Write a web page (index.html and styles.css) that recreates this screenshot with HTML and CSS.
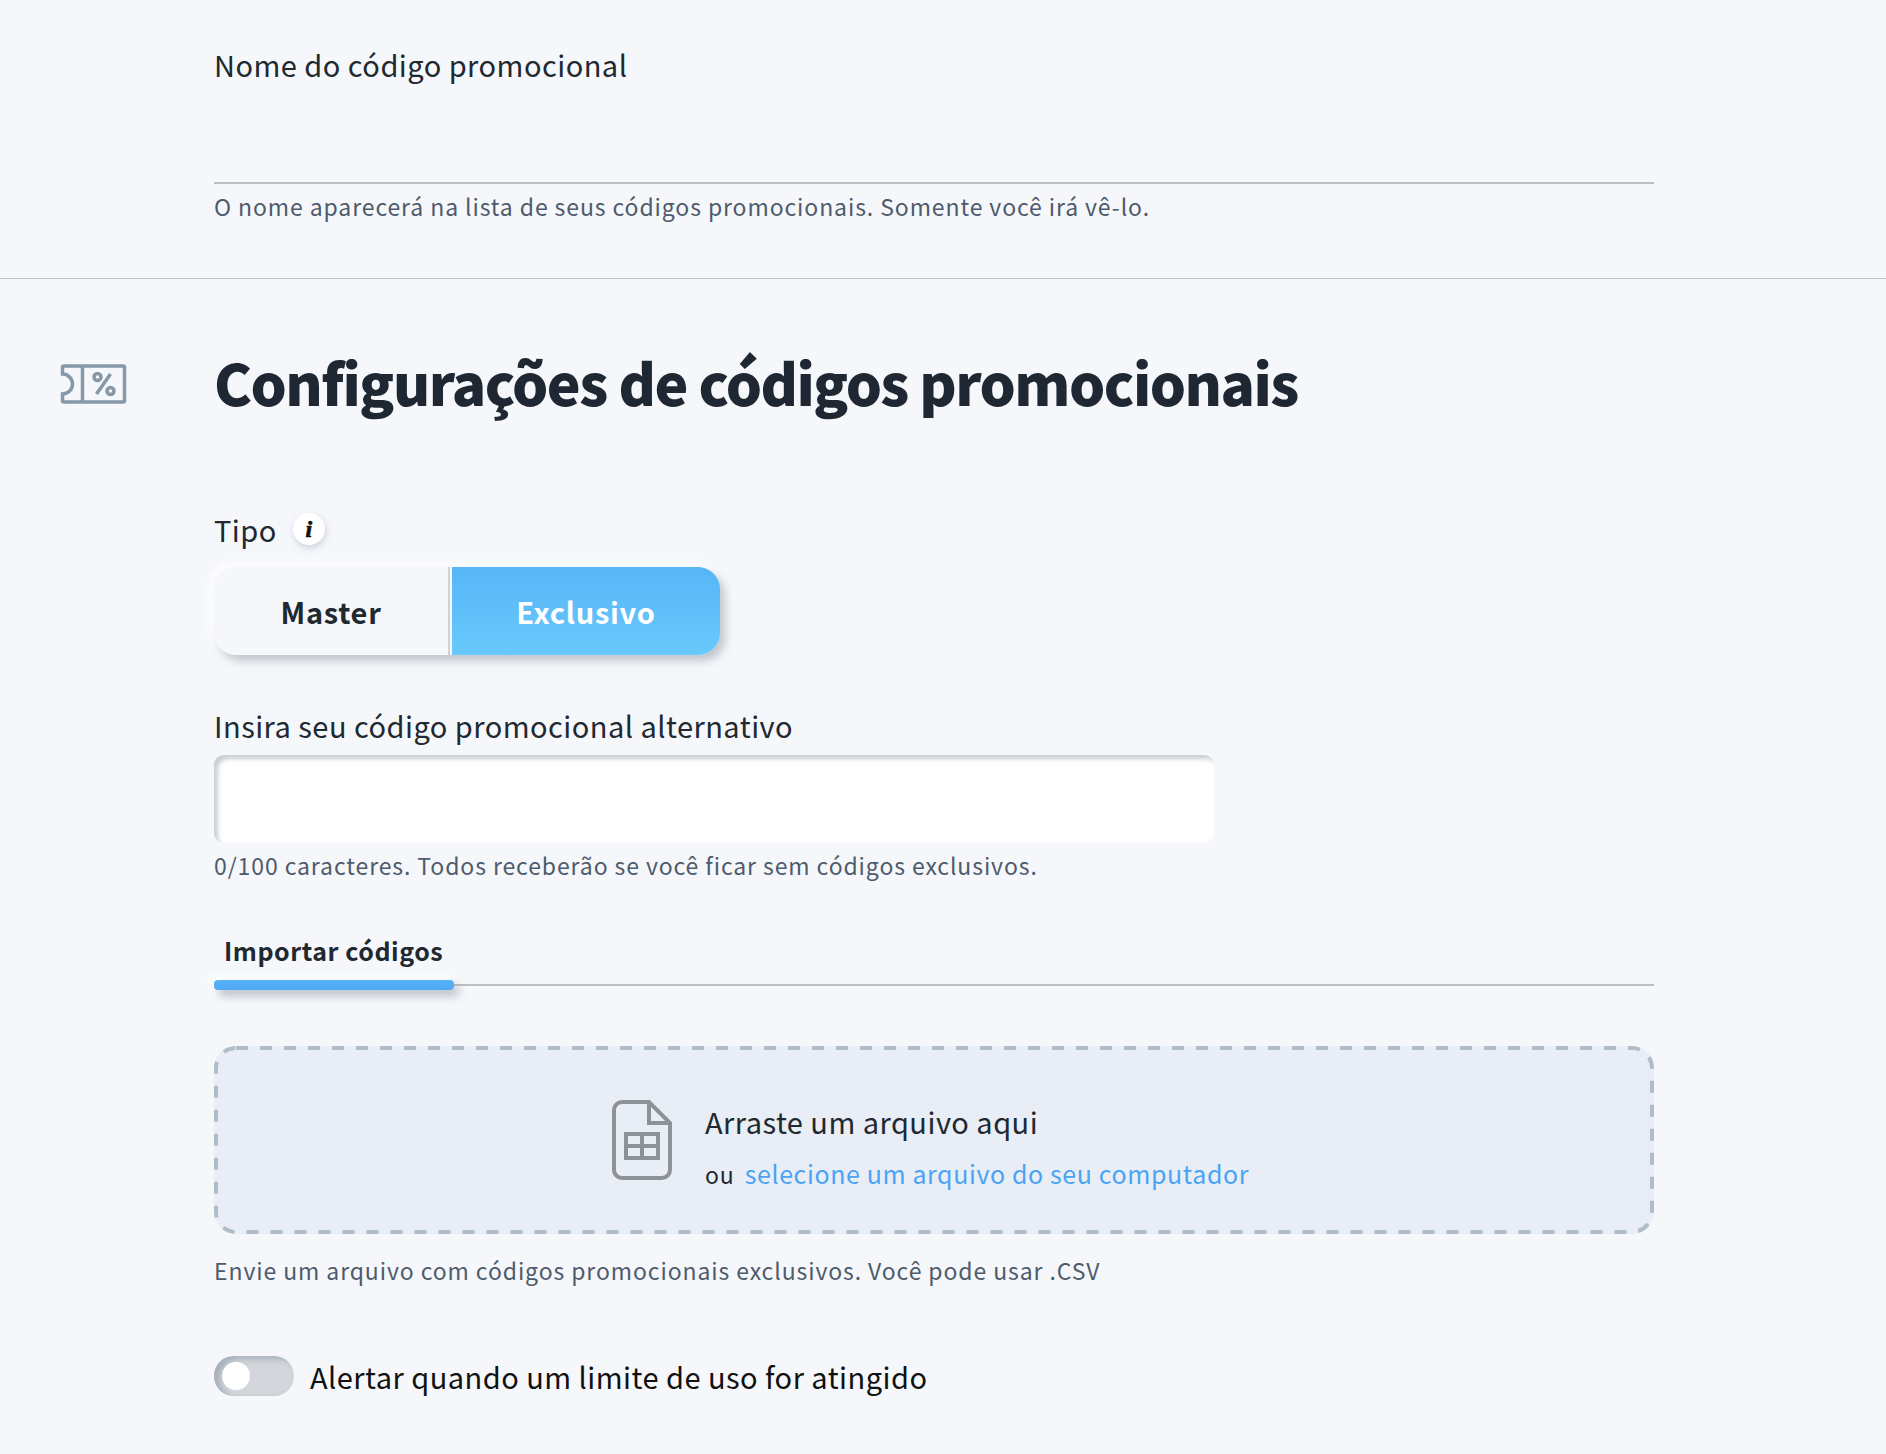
FILE: index.html
```html
<!DOCTYPE html>
<html lang="pt-BR">
	<head>
		<meta charset="UTF-8">
		<meta name="viewport" content="width=device-width, initial-scale=1.0">
		<title>Código promocional</title>
		<link rel="stylesheet" href="styles.css">
	</head>
	<body>
		<section class="nameSection">
			<label class="label nameLabel">Nome do código promocional</label>
			<div class="nameLine"></div>
			<p class="help">O nome aparecerá na lista de seus códigos promocionais. Somente você irá vê-lo.</p>
		</section>

		<section class="settings">
			<div class="titleRow">
				<svg class="ticketIcon" viewBox="0 0 66 40" fill="none" stroke="#8798a8" stroke-width="3.500">
					<path d="M2 3.500a1.500 1.500 0 0 1 1.500-1.500h59a1.500 1.500 0 0 1 1.500 1.500v33a1.500 1.500 0 0 1-1.500 1.500h-59a1.500 1.500 0 0 1-1.500-1.500v-6.500a10 10 0 0 0 0-20z"/>
					<path d="M22 2v36"/>
					<path d="M50 10L36 30"/>
					<circle cx="37" cy="13" r="3.500"/>
					<circle cx="50" cy="27" r="3.500"/>
				</svg>
				<h1 class="title">Configurações de códigos promocionais</h1>
			</div>

			<div class="label typeLabel">
				Tipo
				<span class="infoBadge">i</span>
			</div>
			<div class="typeToggle">
				<button class="typeBtn">Master</button>
				<button class="typeBtn active">Exclusivo</button>
			</div>

			<label class="label codeLabel">Insira seu código promocional alternativo</label>
			<input class="codeInput" type="text">
			<p class="help codeHelp">0/100 caracteres. Todos receberão se você ficar sem códigos exclusivos.</p>

			<div class="tabs">
				<span class="tab">Importar códigos</span>
			</div>

			<div class="dropzone">
				<svg class="dashes" fill="none" stroke="#afbdc9" stroke-width="4" stroke-dasharray="12 12">
					<rect class="dashRect" x="2" y="2" rx="20" ry="20"/>
				</svg>
				<svg class="fileIcon" viewBox="0 0 60 80" fill="none" stroke="#8d9198" stroke-width="4">
					<path d="M10 2h27l21 21v47a8 8 0 0 1-8 8h-40a8 8 0 0 1-8-8v-60a8 8 0 0 1 8-8z"/>
					<path d="M37 2v21h21"/>
					<path d="M14 34h32v24h-32zM30 34v24M14 46h32"/>
				</svg>
				<div class="dropText">
					<div class="dropTitle">Arraste um arquivo aqui</div>
					<div class="dropSub">ou <a class="dropLink" href="#">selecione um arquivo do seu computador</a></div>
				</div>
			</div>
			<p class="help fileHelp">Envie um arquivo com códigos promocionais exclusivos. Você pode usar .CSV</p>

			<div class="alertRow">
				<span class="switch"><span class="knob"></span></span>
				<span class="alertText">Alertar quando um limite de uso for atingido</span>
			</div>
		</section>
	</body>
</html>
```

FILE: styles.css
```css
* {
	box-sizing: border-box;
}

body {
	margin: 0;
	height: 1454px;
	overflow: hidden;
	font-family: "Noto Sans CJK JP", "Noto Sans", sans-serif;
	color: #202830;
	background-color: #f5f7fb;
}

p {
	margin: 0;
}

.label {
	display: block;
	font-size: 29px;
	line-height: 40px;
	letter-spacing: 0.47px;
}

.help {
	font-size: 23px;
	line-height: 32px;
	letter-spacing: 0.9px;
	color: #4e5b6c;
}

.nameSection {
	height: 279px;
	padding: 44px 232px 0 214px;
	border-bottom: 1px solid #bfc2c6;
}

.nameLine {
	height: 2px;
	margin-top: 98px;
	background-color: #bdbfc2;
}

.nameSection .help {
	margin-top: 6px;
}

.settings {
	padding: 0 232px 0 214px;
}

.titleRow {
	display: flex;
	align-items: center;
	margin-left: -154px;
	height: 86px;
	margin-top: 62px;
}

.ticketIcon {
	flex: 0 0 67px;
	width: 67px;
	height: 40px;
	margin-right: 87px;
}

.title {
	margin: 0 0 7px;
	font-size: 57px;
	line-height: 86px;
	font-weight: 900;
	letter-spacing: -1.5px;
	white-space: nowrap;
	color: #1f2832;
}

.typeLabel {
	display: flex;
	align-items: center;
	gap: 16px;
	margin-top: 82px;
}

.infoBadge {
	width: 32px;
	height: 32px;
	border-radius: 50%;
	background-color: #fff;
	box-shadow: 1px 3px 6px rgba(120, 130, 145, 0.3);
	font-family: "Liberation Serif", serif;
	font-size: 24px;
	font-style: italic;
	font-weight: 700;
	line-height: 32px;
	letter-spacing: 0;
	text-align: center;
	color: #111;
	-webkit-text-stroke: 0.7px #111;
}

.typeToggle {
	display: flex;
	width: 506px;
	height: 88px;
	margin-top: 18px;
	border-radius: 22px;
	box-shadow: 5px 6px 9px rgba(120, 125, 135, 0.4), -4px -4px 10px #fff;
}

.typeBtn {
	border: none;
	padding: 0;
	font-family: inherit;
	font-size: 29px;
	font-weight: 700;
	letter-spacing: 0.75px;
	color: #202830;
	background-color: #f5f7fb;
}

.typeBtn:first-child {
	flex: 0 0 236px;
	border-right: 2px solid #cfd2d6;
	border-radius: 22px 0 0 22px;
}

.typeBtn.active {
	flex: 1;
	margin-left: 2px;
	border-radius: 0 22px 22px 0;
	color: #fff;
	background: linear-gradient(#57b5f6, #69c9fc);
}

.codeLabel {
	margin-top: 50px;
}

.codeInput {
	display: block;
	width: 1000px;
	height: 88px;
	margin-top: 10px;
	border: none;
	border-radius: 10px;
	outline: 0;
	background-color: #fff;
	box-shadow: inset 4px 4px 4px rgba(150, 160, 170, 0.5);
}

.codeHelp {
	margin-top: 6px;
}

.tabs {
	height: 52px;
	margin-top: 53px;
	border-bottom: 2px solid #bdbfc2;
}

.tab {
	position: relative;
	display: block;
	width: 240px;
	height: 50px;
	padding-left: 10px;
	font-size: 25px;
	font-weight: 700;
	line-height: 32px;
	letter-spacing: 0.55px;
	white-space: nowrap;
}

.tab::after {
	content: "";
	position: absolute;
	left: 0;
	right: 0;
	bottom: -6px;
	height: 10px;
	border-radius: 4px;
	background: linear-gradient(#55b2f6, #4fa9f5);
	box-shadow: 5px 6px 8px rgba(120, 125, 135, 0.45), -4px -4px 8px #fff;
}

.dropzone {
	position: relative;
	display: flex;
	justify-content: center;
	align-items: center;
	gap: 33px;
	height: 188px;
	margin-top: 60px;
	padding-right: 7px;
	border-radius: 22px;
	background-color: #e9edf5;
}

.dashes {
	position: absolute;
	top: 0;
	left: 0;
	width: 100%;
	height: 100%;
}

.dashRect {
	width: calc(100% - 4px);
	height: calc(100% - 4px);
}

.fileIcon {
	flex: 0 0 60px;
	width: 60px;
	height: 80px;
}

.dropText {
	padding-top: 10px;
}

.dropTitle {
	font-size: 29px;
	line-height: 40px;
	letter-spacing: 0.47px;
}

.dropSub {
	margin-top: 16px;
	font-size: 23px;
	line-height: 32px;
	letter-spacing: 0.9px;
}

.dropLink {
	margin-left: 4px;
	font-size: 25px;
	letter-spacing: 0.6px;
	color: #4aa4f5;
	text-decoration: none;
}

.fileHelp {
	margin-top: 20px;
}

.alertRow {
	display: flex;
	align-items: center;
	gap: 16px;
	margin-top: 70px;
}

.switch {
	display: flex;
	align-items: center;
	width: 80px;
	height: 40px;
	padding-left: 8px;
	border-radius: 20px;
	background-color: #d3d6da;
	box-shadow: inset 6px 3px 6px rgba(130, 145, 160, 0.55);
}

.knob {
	width: 28px;
	height: 28px;
	border-radius: 50%;
	background-color: #fff;
}

.alertText {
	font-size: 29px;
	line-height: 40px;
	letter-spacing: 0.47px;
	color: #111;
}
```
